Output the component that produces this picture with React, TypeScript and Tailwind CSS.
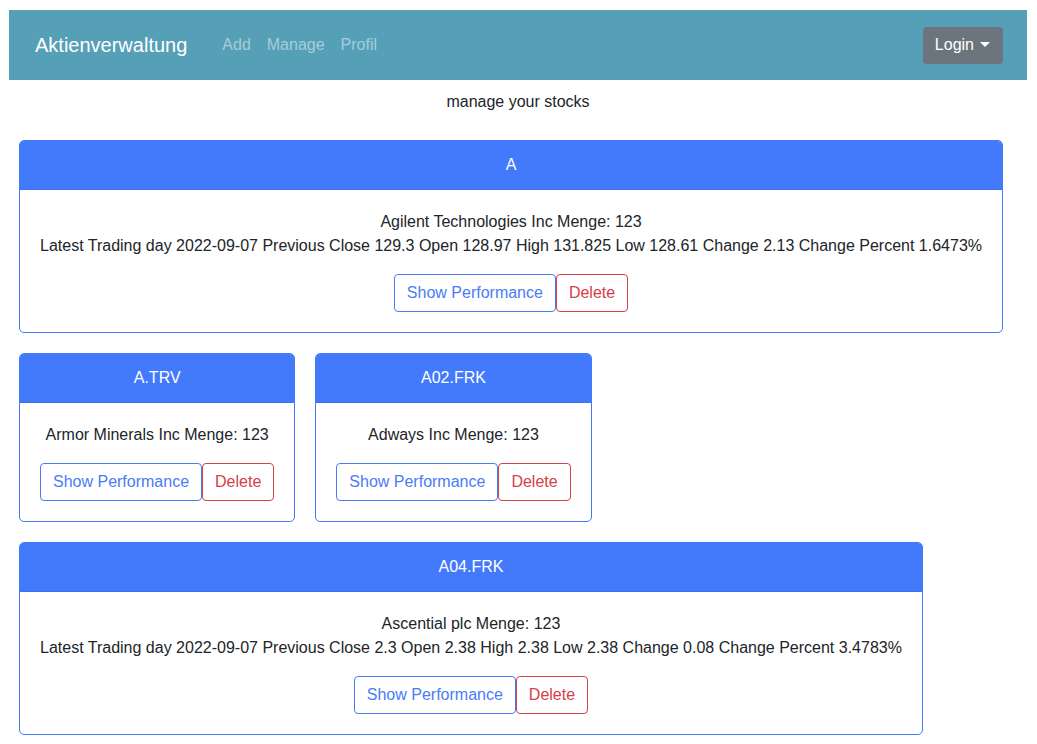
import React from 'react'

interface Stock {
  symbol: string
  name: string
  amount: number
  quote?: string
}

const stocks: Stock[] = [
  {
    symbol: 'A',
    name: 'Agilent Technologies Inc',
    amount: 123,
    quote: 'Latest Trading day 2022-09-07 Previous Close 129.3 Open 128.97 High 131.825 Low 128.61 Change 2.13 Change Percent 1.6473%',
  },
  { symbol: 'A.TRV', name: 'Armor Minerals Inc', amount: 123 },
  { symbol: 'A02.FRK', name: 'Adways Inc', amount: 123 },
  {
    symbol: 'A04.FRK',
    name: 'Ascential plc',
    amount: 123,
    quote: 'Latest Trading day 2022-09-07 Previous Close 2.3 Open 2.38 High 2.38 Low 2.38 Change 0.08 Change Percent 3.4783%',
  },
]

function StockCard({ stock }: { stock: Stock }) {
  return (
    <div className="m-[10px] w-fit rounded-[5px] border border-[#437afb] bg-white">
      <div className="rounded-t-[4px] border-b border-[#3f72e6] bg-[#437afb] py-3 text-center leading-6 text-white">
        {stock.symbol}
      </div>
      <div className="p-5 text-center">
        <p className="mb-4 leading-6 text-[#212529]">
          {stock.name} Menge: {stock.amount}
          {stock.quote && (
            <>
              <br />
              {stock.quote}
            </>
          )}
        </p>
        <div className="flex justify-center">
          <button className="rounded-[4px] border border-[#4a7cf6] px-3 py-1.5 leading-6 text-[#4a7cf6]">
            Show Performance
          </button>
          <button className="rounded-[4px] border border-[#d6404a] px-3 py-1.5 leading-6 text-[#d6404a]">
            Delete
          </button>
        </div>
      </div>
    </div>
  )
}

export default function App() {
  return (
    <div className="min-h-screen bg-white pl-[9px] pr-[10px] pt-[10px] font-['Liberation_Sans',Arial,sans-serif] text-base text-[#212529]">
      {/* Navbar */}
      <nav className="flex h-[70px] items-center justify-between bg-[#55a0b6] pl-[26px] pr-6">
        <div className="flex items-center">
          <span className="mr-[27px] text-xl text-white">Aktienverwaltung</span>
          <a className="px-2 text-[#a6cdd9]">Add</a>
          <a className="px-2 text-[#a6cdd9]">Manage</a>
          <a className="px-2 text-[#a6cdd9]">Profil</a>
        </div>
        <button className="flex h-[37px] items-center rounded-[4px] bg-[#6c757d] pl-3 pr-[13px] leading-6 text-white">
          Login
          <svg className="ml-1.5" width="10" height="6" viewBox="0 0 10 6">
            <path d="M0 0h10L5 5z" fill="white" />
          </svg>
        </button>
      </nav>

      <p className="mt-[10px] mb-4 text-center leading-6">manage your stocks</p>

      {/* Stock cards */}
      <div className="flex flex-wrap items-start">
        {stocks.map((s) => (
          <StockCard key={s.symbol} stock={s} />
        ))}
      </div>
    </div>
  )
}
